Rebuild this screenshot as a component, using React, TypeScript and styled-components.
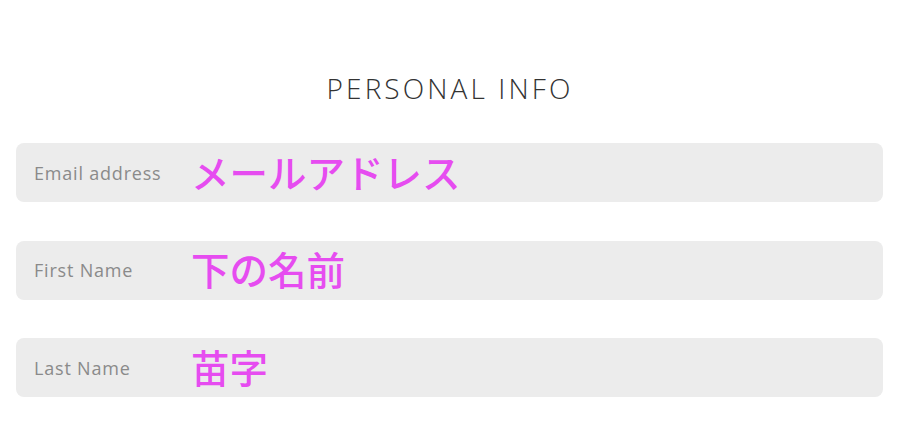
import React from "react";
import styled, { createGlobalStyle } from "styled-components";

const Global = createGlobalStyle`
  html, body {
    margin: 0;
    padding: 0;
    background: #ffffff;
  }
  body {
    font-family: "Open Sans", "Noto Sans", sans-serif;
  }
`;

const Page = styled.div`
  width: 900px;
  padding: 0 16px;
  box-sizing: border-box;
`;

const Title = styled.h1`
  margin: 0;
  padding-top: 69px;
  height: 39px;
  line-height: 38px;
  text-align: center;
  font-family: "Open Sans", sans-serif;
  font-weight: 300;
  font-size: 28px;
  letter-spacing: 3.1px;
  color: #333333;
`;

const Fields = styled.div`
  display: flex;
  flex-direction: column;
  gap: 38.5px;
  margin-top: 35px;
  width: 867px;
`;

const Row = styled.div`
  display: flex;
  align-items: center;
  height: 59px;
  border-radius: 8px;
  background: #ececec;
  padding-left: 18px;
`;

const Label = styled.div`
  width: 157px;
  flex: 0 0 auto;
  font-family: "Open Sans", sans-serif;
  font-size: 18px;
  letter-spacing: 0.8px;
  color: #8a8a8a;
`;

const Value = styled.div`
  font-family: "Noto Sans CJK JP", "Noto Sans", sans-serif;
  font-weight: 500;
  font-size: 38.5px;
  line-height: 1;
  color: #e64cf0;
  margin-top: -3px;
`;

const fields = [
  { label: "Email address", value: "メールアドレス" },
  { label: "First Name", value: "下の名前" },
  { label: "Last Name", value: "苗字" },
];

const App = () => (
  <>
    <Global />
    <Page>
      <Title>PERSONAL INFO</Title>
      <Fields>
        {fields.map((f) => (
          <Row key={f.label}>
            <Label>{f.label}</Label>
            <Value>{f.value}</Value>
          </Row>
        ))}
      </Fields>
    </Page>
  </>
);

export default App;
